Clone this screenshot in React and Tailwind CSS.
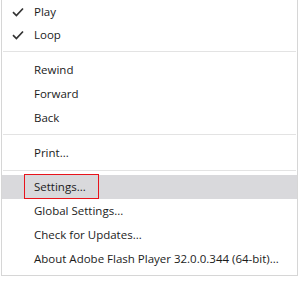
const Check = () => (
  <svg className="w-[12px] h-[10px]" viewBox="0 0 12 10" fill="none" stroke="#333333" strokeWidth="1.7">
    <path d="M1 5.2l3.4 3.4L11 1.5" />
  </svg>
);

const Item = ({ label, checked, className = 'h-6' }) => (
  <div className={`relative flex items-center ${className}`}>
    {checked && (
      <span className="absolute left-[10px] top-1/2 -translate-y-1/2 flex">
        <Check />
      </span>
    )}
    <span className="pl-[32px]">{label}</span>
  </div>
);

const Separator = ({ className = 'pt-1 pb-[6px]' }) => (
  <div className={className}>
    <div className="h-px bg-[#e3e3e3] mx-px" />
  </div>
);

export default function App() {
  return (
    <div className="w-[299px] h-[283px] bg-white overflow-hidden">
      <div
        className="ml-px w-[297px] border-l border-r border-b border-[#d6d6d6] pb-1 text-[11.5px] text-[#1b1b1b]"
        style={{ fontFamily: '"Open Sans", "Noto Sans", sans-serif' }}
      >
        <Item label="Play" checked className="h-[23px]" />
        <Item label="Loop" checked />
        <Separator />
        <Item label="Rewind" />
        <Item label="Forward" />
        <Item label="Back" />
        <Separator />
        <Item label="Print..." />
        <Separator className="pt-[5px] pb-1" />
        <div className="relative bg-[#d9d9dc]">
          <Item label="Settings..." />
          <div className="absolute left-[22px] top-[-1px] w-[75px] h-[25px] border border-[#e8141c]" />
        </div>
        <Item label="Global Settings..." />
        <Item label="Check for Updates..." />
        <Item label="About Adobe Flash Player 32.0.0.344 (64-bit)..." />
      </div>
    </div>
  );
}
